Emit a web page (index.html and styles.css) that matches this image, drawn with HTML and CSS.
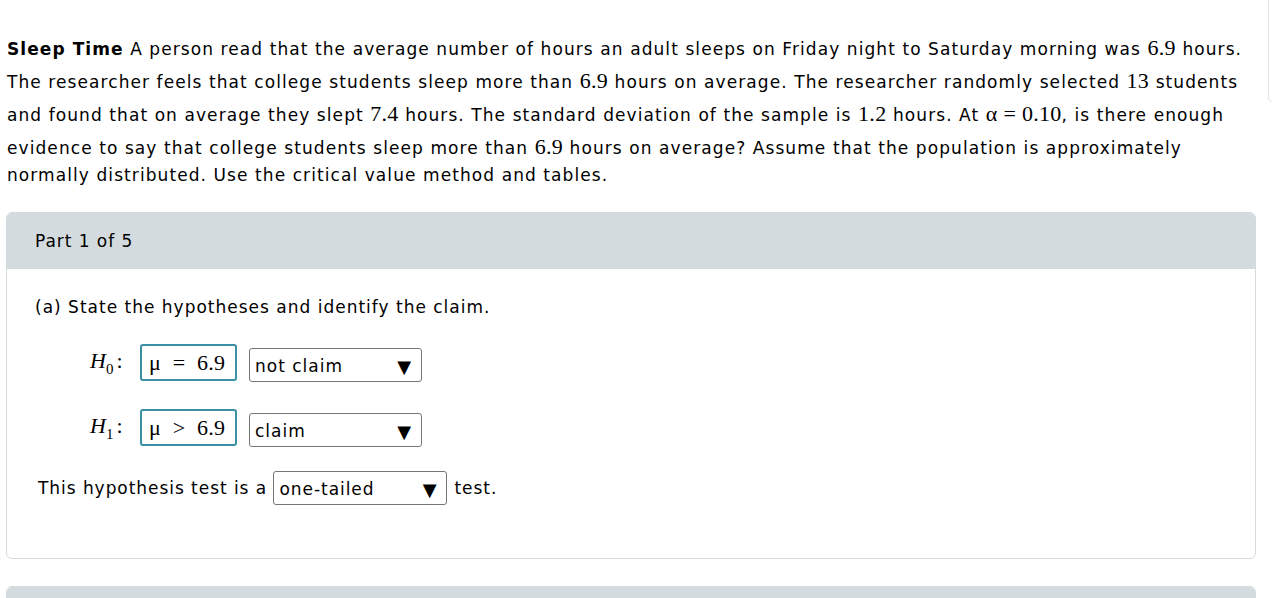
FILE: index.html
```html
<!DOCTYPE html>
<html>
<head>
<meta charset="utf-8">
<link rel="stylesheet" href="styles.css">
</head>
<body>
<div class="side-panel"></div>
<p class="problem"><b>Sleep Time</b> A person read that the average number of hours an adult sleeps on Friday night to Saturday morning was <span class="m">6.9</span> hours. The researcher feels that college students sleep more than <span class="m">6.9</span> hours on average. The researcher randomly selected <span class="m">13</span> students and found that on average they slept <span class="m">7.4</span> hours. The standard deviation of the sample is <span class="m">1.2</span> hours. At <span class="m">α = 0.10</span>, is there enough evidence to say that college students sleep more than <span class="m">6.9</span> hours on average? Assume that the population is approximately normally distributed. Use the critical value method and tables.</p>

<section class="card">
  <div class="card-head">Part 1 of 5</div>
  <div class="card-body">
    <div class="question">(a) State the hypotheses and identify the claim.</div>
    <div class="hyp">
      <span class="hlabel"><i>H</i><sub>0</sub>:</span>
      <span class="mbox">μ&nbsp; =&nbsp; 6.9</span>
      <span class="dd dd-claim"><span>not claim</span><span class="arrow">▼</span></span>
    </div>
    <div class="hyp hyp2">
      <span class="hlabel"><i>H</i><sub>1</sub>:</span>
      <span class="mbox">μ&nbsp; &gt;&nbsp; 6.9</span>
      <span class="dd dd-claim"><span>claim</span><span class="arrow">▼</span></span>
    </div>
    <div class="tail"><span>This hypothesis test is a </span><span class="dd dd-tail"><span>one-tailed</span><span class="arrow">▼</span></span><span>test.</span></div>
  </div>
</section>
<section class="card card-next">
  <div class="card-head"></div>
</section>
</body>
</html>
```
FILE: styles.css
```css
html, body {
  margin: 0;
  padding: 0;
  background: #ffffff;
  color: #000000;
  font-family: "DejaVu Sans", Verdana, sans-serif;
  overflow: hidden;
}
body {
  position: relative;
  height: 598px;
}
.side-panel {
  position: absolute;
  left: 1268px;
  top: -10px;
  width: 30px;
  height: 113px;
  border: 1px solid #dde3e5;
  border-radius: 6px;
  box-sizing: border-box;
}
.problem {
  margin: 30px 0 0 7px;
  width: 1242px;
  font-size: 17px;
  letter-spacing: 1.08px;
  line-height: 27px;
}
.problem b {
  font-weight: bold;
}
.m {
  display: inline-block;
  font-family: "Liberation Serif", "Times New Roman", serif;
  font-size: 22px;
  letter-spacing: 0.3px;
  line-height: 27px;
  padding-top: 4px;
}
.card {
  margin: 23px 0 0 6px;
  width: 1250px;
  border: 1px solid #d3dbde;
  border-radius: 6px;
  box-sizing: border-box;
  overflow: hidden;
}
.card-head {
  background: #d3dbde;
  height: 56px;
  padding-left: 28px;
  display: flex;
  align-items: center;
  font-size: 17px;
  letter-spacing: 0.95px;
}
.card-body {
  padding: 26px 0 0 28px;
  height: 289px;
  box-sizing: border-box;
  font-size: 17px;
  letter-spacing: 1px;
}
.question {
  line-height: 24px;
}
.hyp {
  display: flex;
  align-items: center;
  margin-top: 25px;
  padding-left: 55px;
  height: 37px;
}
.hyp2 {
  margin-top: 28px;
}
.hlabel {
  font-family: "Liberation Serif", "Times New Roman", serif;
  font-size: 22px;
  letter-spacing: 0;
  width: 50px;
  white-space: nowrap;
}
.hlabel i {
  font-style: italic;
}
.hlabel sub {
  font-size: 15px;
  vertical-align: -6px;
  margin-right: 3px;
}
.mbox {
  display: inline-flex;
  align-items: center;
  box-sizing: border-box;
  height: 37px;
  width: 97px;
  padding-left: 7px;
  border: 2px solid #3b8fa3;
  border-radius: 3px;
  font-family: "Liberation Serif", "Times New Roman", serif;
  font-size: 22px;
  letter-spacing: 0.3px;
  white-space: pre;
}
.dd {
  display: inline-flex;
  align-items: center;
  justify-content: space-between;
  box-sizing: border-box;
  height: 34px;
  border: 1px solid #767676;
  border-radius: 3px;
  padding: 2px 10px 0 5px;
  background: #ffffff;
}
.dd-claim {
  width: 173px;
  margin-left: 12px;
  margin-top: 5px;
}
.arrow {
  font-size: 18px;
  letter-spacing: 0;
}
.tail {
  margin-top: 25px;
  padding-left: 3px;
  display: flex;
  align-items: center;
  white-space: pre;
  letter-spacing: 0.95px;
}
.dd-tail {
  width: 174px;
  margin: 0 7px 0 0;
}
.card-next {
  margin-top: 27px;
}
.card-next .card-head {
  height: 30px;
}
```
